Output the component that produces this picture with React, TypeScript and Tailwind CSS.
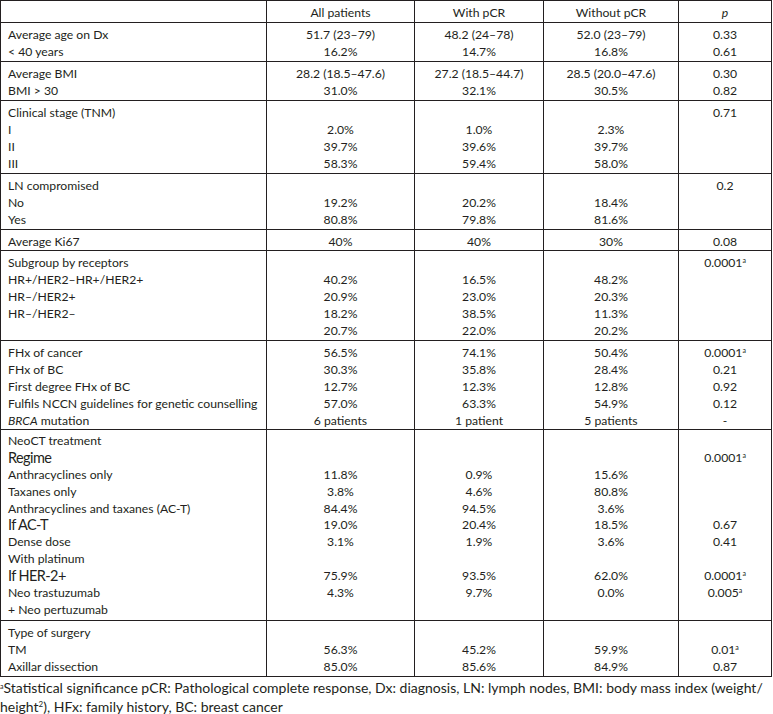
import React from "react";

type Line = React.ReactNode;

type Group = {
	label: Line[];
	all: Line[];
	with: Line[];
	without: Line[];
	p: Line[];
	lh?: string;
	pb?: string;
};

const A = () => <span className="relative -top-[4px] text-[7px] leading-none">a</span>;
const sig = (v: string) => (
	<>
		{v}
		<A />
	</>
);
const big = (t: string) => <span className="text-[14.5px] tracking-[-0.6px]">{t}</span>;

const GROUPS: Group[] = [
	{
		label: ["Average age on Dx", "< 40 years"],
		all: ["51.7 (23–79)", "16.2%"],
		with: ["48.2 (24–78)", "14.7%"],
		without: ["52.0 (23–79)", "16.8%"],
		p: ["0.33", "0.61"],
	},
	{
		label: ["Average BMI", "BMI > 30"],
		all: ["28.2 (18.5–47.6)", "31.0%"],
		with: ["27.2 (18.5–44.7)", "32.1%"],
		without: ["28.5 (20.0–47.6)", "30.5%"],
		p: ["0.30", "0.82"],
	},
	{
		label: ["Clinical stage (TNM)", "I", "II", "III"],
		all: ["", "2.0%", "39.7%", "58.3%"],
		with: ["", "1.0%", "39.6%", "59.4%"],
		without: ["", "2.3%", "39.7%", "58.0%"],
		p: ["0.71"],
	},
	{
		label: ["LN compromised", "No", "Yes"],
		all: ["", "19.2%", "80.8%"],
		with: ["", "20.2%", "79.8%"],
		without: ["", "18.4%", "81.6%"],
		p: ["0.2"],
	},
	{
		label: ["Average Ki67"],
		all: ["40%"],
		with: ["40%"],
		without: ["30%"],
		p: ["0.08"],
		pb: "pb-0",
	},
	{
		label: ["Subgroup by receptors", "HR+/HER2–HR+/HER2+", "HR–/HER2+", "HR–/HER2–", ""],
		all: ["", "40.2%", "20.9%", "18.2%", "20.7%"],
		with: ["", "16.5%", "23.0%", "38.5%", "22.0%"],
		without: ["", "48.2%", "20.3%", "11.3%", "20.2%"],
		p: [sig("0.0001")],
	},
	{
		label: [
			"FHx of cancer",
			"FHx of BC",
			"First degree FHx of BC",
			"Fulfils NCCN guidelines for genetic counselling",
			<>
				<i>BRCA</i> mutation
			</>,
		],
		all: ["56.5%", "30.3%", "12.7%", "57.0%", "6 patients"],
		with: ["74.1%", "35.8%", "12.3%", "63.3%", "1 patient"],
		without: ["50.4%", "28.4%", "12.8%", "54.9%", "5 patients"],
		p: [sig("0.0001"), "0.21", "0.92", "0.12", "-"],
		pb: "pb-0",
	},
	{
		label: [
			"NeoCT treatment",
			big("Regime"),
			"Anthracyclines only",
			"Taxanes only",
			"Anthracyclines and taxanes (AC-T)",
			big("If AC-T"),
			"Dense dose",
			"With platinum",
			big("If HER-2+"),
			"Neo trastuzumab",
			"+ Neo pertuzumab",
		],
		all: ["", "", "11.8%", "3.8%", "84.4%", "19.0%", "3.1%", "", "75.9%", "4.3%", ""],
		with: ["", "", "0.9%", "4.6%", "94.5%", "20.4%", "1.9%", "", "93.5%", "9.7%", ""],
		without: ["", "", "15.6%", "80.8%", "3.6%", "18.5%", "3.6%", "", "62.0%", "0.0%", ""],
		p: ["", sig("0.0001"), "", "", "", "0.67", "0.41", "", sig("0.0001"), sig("0.005"), ""],
		lh: "h-[16.9px] leading-[16.9px]",
		pb: "pb-[1px]",
	},
	{
		label: ["Type of surgery", "TM", "Axillar dissection"],
		all: ["", "56.3%", "85.0%"],
		with: ["", "45.2%", "85.6%"],
		without: ["", "59.9%", "84.9%"],
		p: ["", sig("0.01"), "0.87"],
	},
];

function Cell({
	lines,
	left,
	rows,
	lh = "h-[17px] leading-[17px]",
	pb = "pb-[1px]",
}: {
	lines: Line[];
	left?: boolean;
	rows: number;
	lh?: string;
	pb?: string;
}) {
	const filled = Array.from({ length: rows }, (_, i) => lines[i] ?? "");
	return (
		<div
			className={`border-r border-b border-[#231f20] pt-[3px] ${pb} ${
				left ? "pl-[7px] text-left" : "text-center"
			}`}
		>
			{filled.map((l, i) => (
				<div key={i} className={`${lh} whitespace-nowrap`}>
					{l === "" ? "\u00a0" : l}
				</div>
			))}
		</div>
	);
}

export default function App() {
	const cols = "grid grid-cols-[266px_148px_129px_135px_93px]";
	return (
		<div
			className="bg-white text-[#231f20] w-[773px] min-h-[714px]"
			style={{ fontFamily: "Lato, 'Noto Sans', sans-serif" }}
		>
			<div className="text-[12.2px] w-[772px] border-t border-l border-[#231f20]">
				<div className={cols}>
					<Cell lines={[""]} left rows={1} />
					<Cell lines={["All patients"]} rows={1} />
					<Cell lines={["With pCR"]} rows={1} />
					<Cell lines={["Without pCR"]} rows={1} />
					<Cell lines={[<i key="p">p</i>]} rows={1} />
				</div>
				{GROUPS.map((g, i) => {
					const rows = g.label.length;
					const extra = { lh: g.lh, pb: g.pb };
					return (
						<div key={i} className={cols}>
							<Cell lines={g.label} left rows={rows} {...extra} />
							<Cell lines={g.all} rows={rows} {...extra} />
							<Cell lines={g.with} rows={rows} {...extra} />
							<Cell lines={g.without} rows={rows} {...extra} />
							<Cell lines={g.p} rows={rows} {...extra} />
						</div>
					);
				})}
			</div>
			<p className="text-[14px] leading-[19px] pt-[1px] pr-2">
				<span className="relative -top-[4px] text-[7px] leading-none">a</span>Statistical significance pCR:
				Pathological complete response, Dx: diagnosis, LN: lymph nodes, BMI: body mass index (weight/ height
				<span className="relative -top-[5px] text-[8px] leading-none">2</span>), HFx: family history, BC: breast
				cancer
			</p>
		</div>
	);
}
